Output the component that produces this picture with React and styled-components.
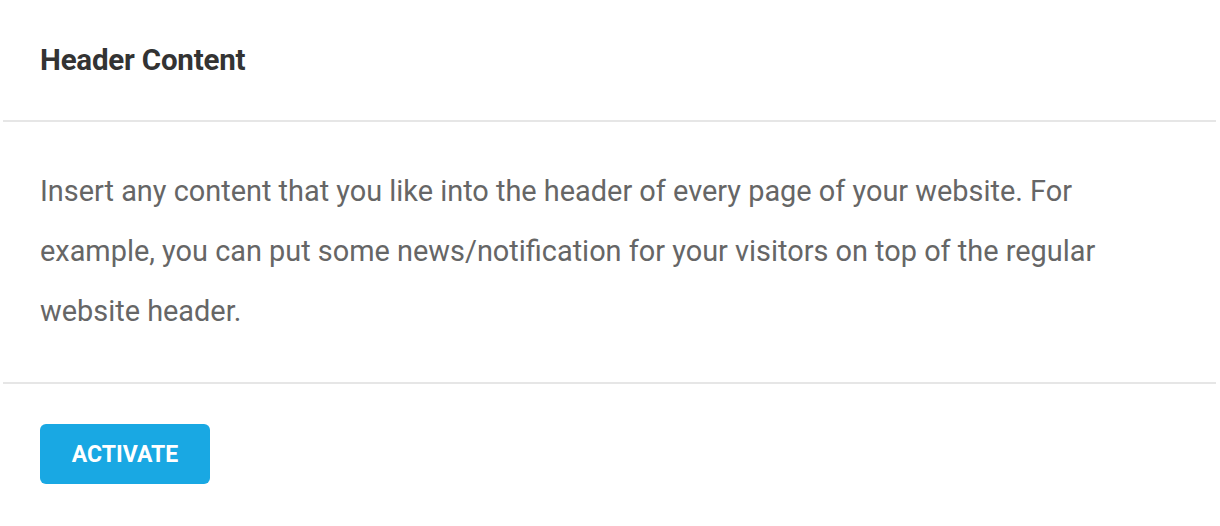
import React from "react"
import styled, { createGlobalStyle } from "styled-components"

const GlobalStyle = createGlobalStyle`
  body {
    margin: 0;
    background: #ffffff;
    font-family: Roboto, "Liberation Sans", sans-serif;
  }
`

const Card = styled.div`
  margin: 0 4px 0 3px;
  background: #ffffff;
`

const CardHeader = styled.div`
  height: 120px;
  display: flex;
  align-items: center;
  padding: 0 37px;
  border-bottom: 2px solid #e6e6e6;
`

const Title = styled.h3`
  margin: 0;
  font-size: 29.5px;
  font-weight: 700;
  color: #333333;
  letter-spacing: -0.2px;
`

const CardBody = styled.div`
  padding: 39px 37px 41px;
  border-bottom: 2px solid #e6e6e6;
`

const Description = styled.p`
  margin: 0;
  font-size: 28.9px;
  line-height: 60px;
  color: #666666;
`

const CardFooter = styled.div`
  padding: 40px 37px 42px;
`

const ActivateButton = styled.button`
  width: 170px;
  height: 60px;
  border: none;
  border-radius: 6px;
  background-color: #19a8e3;
  color: #ffffff;
  font-family: Roboto, "Liberation Sans", sans-serif;
  font-size: 23px;
  font-weight: 700;
  text-transform: uppercase;
  cursor: pointer;
`

const App = () => {
  return (
    <>
      <GlobalStyle />
      <Card>
        <CardHeader>
          <Title>Header Content</Title>
        </CardHeader>
        <CardBody>
          <Description>
            Insert any content that you like into the header of every page of
            your website. For example, you can put some news/notification for
            your visitors on top of the regular website header.
          </Description>
        </CardBody>
        <CardFooter>
          <ActivateButton type="button">Activate</ActivateButton>
        </CardFooter>
      </Card>
    </>
  )
}

export default App
